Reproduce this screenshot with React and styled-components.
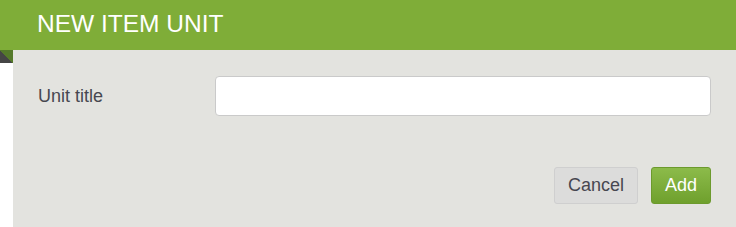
import styled, { createGlobalStyle } from "styled-components";

const Global = createGlobalStyle`
  html, body {
    margin: 0;
    padding: 0;
    background: #ffffff;
    font-family: "Liberation Sans", Arial, sans-serif;
  }
`;

const Dialog = styled.div`
  width: 736px;
  height: 227px;
  display: flex;
  flex-direction: column;
  overflow: hidden;
`;

const Header = styled.header`
  height: 50px;
  flex-shrink: 0;
  background: #7fad38;
  color: #ffffff;
  font-size: 24.5px;
  line-height: 48px;
  padding-left: 37px;
`;

const Main = styled.div`
  flex: 1;
  display: flex;
`;

const Fold = styled.div`
  width: 13px;
  flex-shrink: 0;
  position: relative;
  &::before {
    content: "";
    position: absolute;
    top: 0;
    left: 0;
    width: 13px;
    height: 13px;
    background: linear-gradient(45deg, #454545 50%, #557a2a 50%);
  }
`;

const Body = styled.div`
  flex: 1;
  background: #e3e3df;
  padding: 26px 25px 0 25px;
  display: flex;
  flex-direction: column;
`;

const Row = styled.div`
  display: flex;
  align-items: center;
`;

const Label = styled.label`
  width: 177px;
  flex-shrink: 0;
  font-size: 18px;
  line-height: 20px;
  color: #474750;
`;

const Input = styled.input`
  flex: 1;
  height: 40px;
  box-sizing: border-box;
  border: 1px solid #cacaca;
  border-radius: 4px;
  background: #ffffff;
  outline: none;
  padding: 0 10px;
  font: inherit;
`;

const Actions = styled.div`
  display: flex;
  justify-content: flex-end;
  gap: 13px;
  margin-top: 51px;
`;

const Button = styled.button`
  height: 37px;
  box-sizing: border-box;
  padding: 0 13px;
  border-radius: 3px;
  font-family: "Liberation Sans", Arial, sans-serif;
  font-size: 18px;
  cursor: pointer;
  border: 1px solid ${(p) => (p.$primary ? "#6c9a2d" : "#cfcfcf")};
  color: ${(p) => (p.$primary ? "#ffffff" : "#474750")};
  background: ${(p) =>
    p.$primary
      ? "linear-gradient(#8cbb4a, #6fa02d)"
      : "#dcdcdb"};
`;

export default function App() {
  return (
    <>
      <Global />
      <Dialog>
        <Header>NEW ITEM UNIT</Header>
        <Main>
          <Fold />
          <Body>
            <Row>
              <Label htmlFor="unit-title">Unit title</Label>
              <Input id="unit-title" type="text" />
            </Row>
            <Actions>
              <Button>Cancel</Button>
              <Button $primary>Add</Button>
            </Actions>
          </Body>
        </Main>
      </Dialog>
    </>
  );
}
